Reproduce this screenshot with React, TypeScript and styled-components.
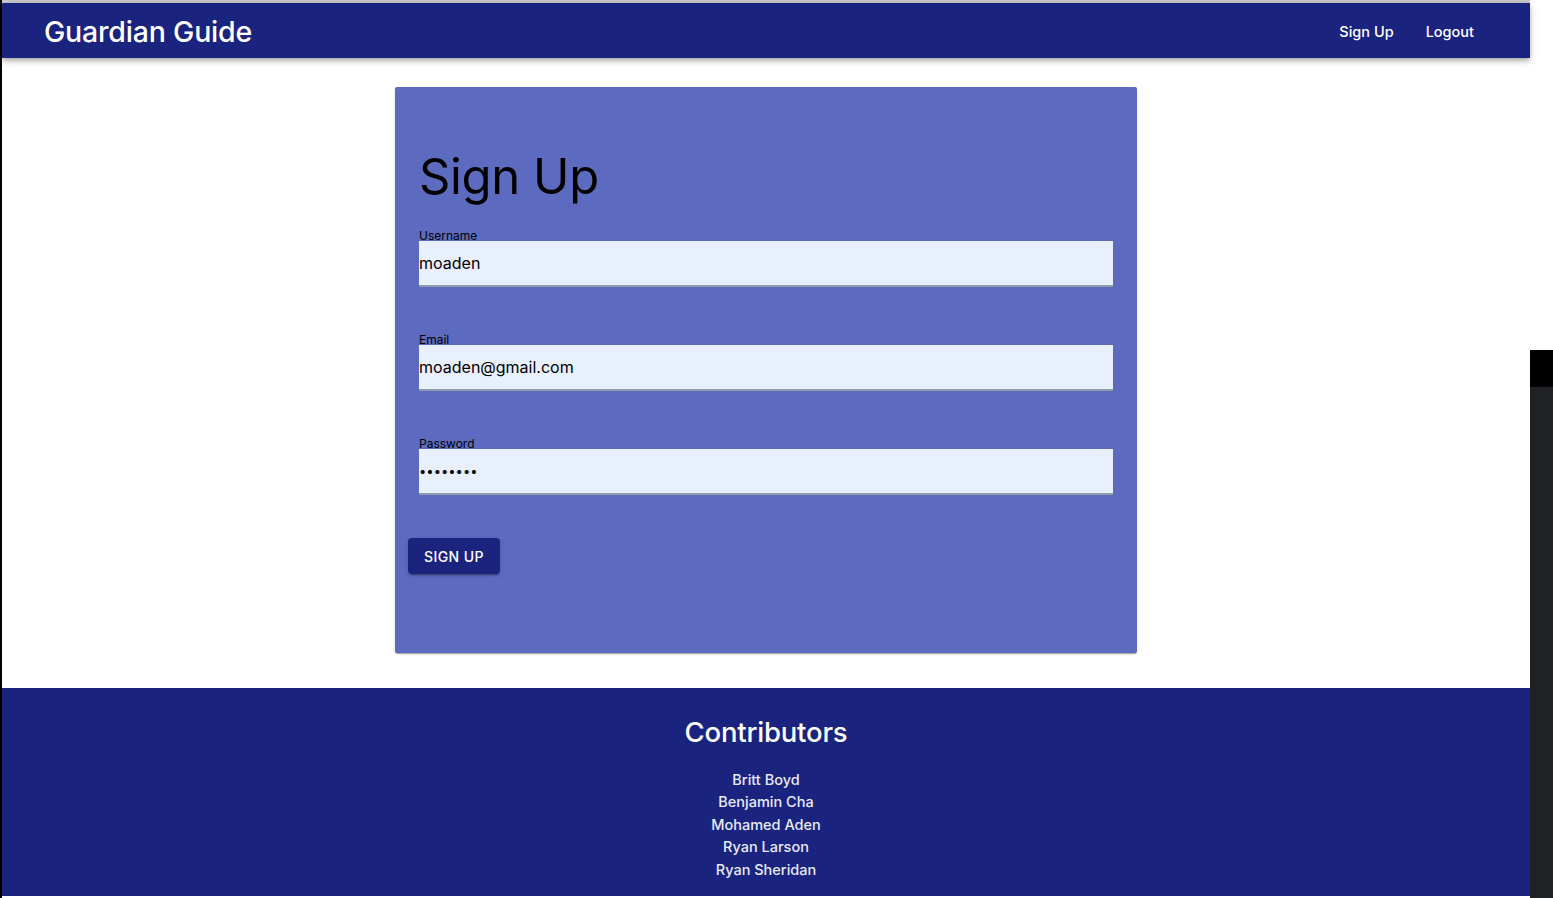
import React, { useState } from "react";
import styled, { createGlobalStyle } from "styled-components";

const GlobalStyle = createGlobalStyle`
  html, body {
    margin: 0;
    padding: 0;
    background: #ffffff;
  }
  body {
    font-family: Inter, "Noto Sans", "Liberation Sans", sans-serif;
    -webkit-font-smoothing: antialiased;
  }
`;

const Frame = styled.div`
  display: grid;
  grid-template-columns: 2px 1528px 23px;
  width: 1553px;
  height: 898px;
  overflow: hidden;
`;

const LeftEdge = styled.div`
  background: #000000;
`;

const Page = styled.div`
  display: flex;
  flex-direction: column;
  background: #ffffff;
`;

const TopLine = styled.div`
  height: 3px;
  background: #c9c9cc;
`;

const Header = styled.header`
  position: relative;
  z-index: 1;
  height: 55px;
  display: flex;
  align-items: center;
  justify-content: space-between;
  padding: 0 56px 0 42px;
  background: #1a237e;
  color: #ffffff;
  box-shadow: 0 2px 4px -1px rgba(0, 0, 0, 0.2), 0 4px 5px 0 rgba(0, 0, 0, 0.14),
    0 1px 10px 0 rgba(0, 0, 0, 0.12);
`;

const Brand = styled.h1`
  margin: 0;
  padding-top: 1px;
  font-size: 28.5px;
  font-weight: 500;
  letter-spacing: -0.2px;
`;

const Nav = styled.nav`
  display: flex;
  gap: 32px;
  padding-top: 2px;
`;

const NavLink = styled.a`
  color: #ffffff;
  text-decoration: none;
  font-size: 14.5px;
  font-weight: 500;
  cursor: pointer;
`;

const Main = styled.main`
  display: flex;
  justify-content: center;
  padding: 29px 0 35px;
`;

const Card = styled.section`
  width: 742px;
  height: 566px;
  box-sizing: border-box;
  padding: 0 13px;
  background: #5c6bc0;
  border-radius: 2px;
  box-shadow: 0 2px 1px -1px rgba(0, 0, 0, 0.2), 0 1px 1px 0 rgba(0, 0, 0, 0.14),
    0 1px 3px 0 rgba(0, 0, 0, 0.12);
`;

const Title = styled.h2`
  margin: 60px 11px 24px;
  font-size: 49px;
  line-height: 60px;
  font-weight: 400;
  letter-spacing: -0.4px;
  color: #000000;
`;

const Form = styled.form`
  display: flex;
  flex-direction: column;
  align-items: flex-start;
`;

const Field = styled.div`
  display: flex;
  flex-direction: column;
  width: 694px;
  margin: 0 11px 48px;

  &:last-of-type {
    margin-bottom: 43px;
  }
`;

const Label = styled.label`
  font-size: 12px;
  line-height: 10px;
  color: #000000;
`;

const Input = styled.input`
  height: 44px;
  box-sizing: content-box;
  padding: 0;
  border: none;
  border-bottom: 2px solid #8e9ba8;
  background: #e8f0fe;
  font-family: inherit;
  font-size: ${(p) => (p.type === "password" ? "13px" : "16px")};
  color: #000000;
  outline: none;
`;

const SubmitButton = styled.button`
  height: 36px;
  padding: 0 16px;
  border: none;
  border-radius: 4px;
  background: #1a237e;
  color: #ffffff;
  font-family: inherit;
  font-size: 14px;
  font-weight: 500;
  letter-spacing: 0.4px;
  text-transform: uppercase;
  cursor: pointer;
  box-shadow: 0 3px 1px -2px rgba(0, 0, 0, 0.2), 0 2px 2px 0 rgba(0, 0, 0, 0.14),
    0 1px 5px 0 rgba(0, 0, 0, 0.12);
`;

const Footer = styled.footer`
  height: 208px;
  box-sizing: border-box;
  padding-top: 24px;
  background: #1a237e;
  color: #ffffff;
  text-align: center;
`;

const FooterTitle = styled.h3`
  margin: 0 0 16.5px;
  font-size: 27.5px;
  line-height: 40px;
  font-weight: 500;
  letter-spacing: -0.2px;
`;

const Name = styled.p`
  margin: 0;
  font-size: 14.5px;
  line-height: 22.5px;
  font-weight: 500;
  color: #e8eaf6;
`;

const SideBar = styled.div`
  display: flex;
  flex-direction: column;
  background: #ffffff;
`;

const SideBlock = styled.div<{ $h?: number; $color: string }>`
  height: ${(p) => (p.$h ? `${p.$h}px` : "auto")};
  flex: ${(p) => (p.$h ? "none" : "1")};
  background: ${(p) => p.$color};
`;

const contributors = ["Britt Boyd", "Benjamin Cha", "Mohamed Aden", "Ryan Larson", "Ryan Sheridan"];

export default function App() {
  const [formValues, setFormValues] = useState({
    username: "moaden",
    email: "moaden@gmail.com",
    password: "password",
  });

  function onFormChange(e: React.ChangeEvent<HTMLInputElement>) {
    const { name, value } = e.target;
    setFormValues({ ...formValues, [name]: value });
  }

  return (
    <>
      <GlobalStyle />
      <Frame>
        <LeftEdge />
        <Page>
          <TopLine />
          <Header>
            <Brand>Guardian Guide</Brand>
            <Nav>
              <NavLink>Sign Up</NavLink>
              <NavLink>Logout</NavLink>
            </Nav>
          </Header>
          <Main>
            <Card>
              <Title>Sign Up</Title>
              <Form onSubmit={(e) => e.preventDefault()}>
                <Field>
                  <Label htmlFor="username">Username</Label>
                  <Input id="username" name="username" value={formValues.username} onChange={onFormChange} />
                </Field>
                <Field>
                  <Label htmlFor="email">Email</Label>
                  <Input id="email" name="email" value={formValues.email} onChange={onFormChange} />
                </Field>
                <Field>
                  <Label htmlFor="password">Password</Label>
                  <Input
                    id="password"
                    name="password"
                    type="password"
                    value={formValues.password}
                    onChange={onFormChange}
                  />
                </Field>
                <SubmitButton type="submit">Sign Up</SubmitButton>
              </Form>
            </Card>
          </Main>
          <Footer>
            <FooterTitle>Contributors</FooterTitle>
            {contributors.map((name) => (
              <Name key={name}>{name}</Name>
            ))}
          </Footer>
        </Page>
        <SideBar>
          <SideBlock $h={350} $color="#ffffff" />
          <SideBlock $h={37} $color="#000000" />
          <SideBlock $color="#202124" />
        </SideBar>
      </Frame>
    </>
  );
}
